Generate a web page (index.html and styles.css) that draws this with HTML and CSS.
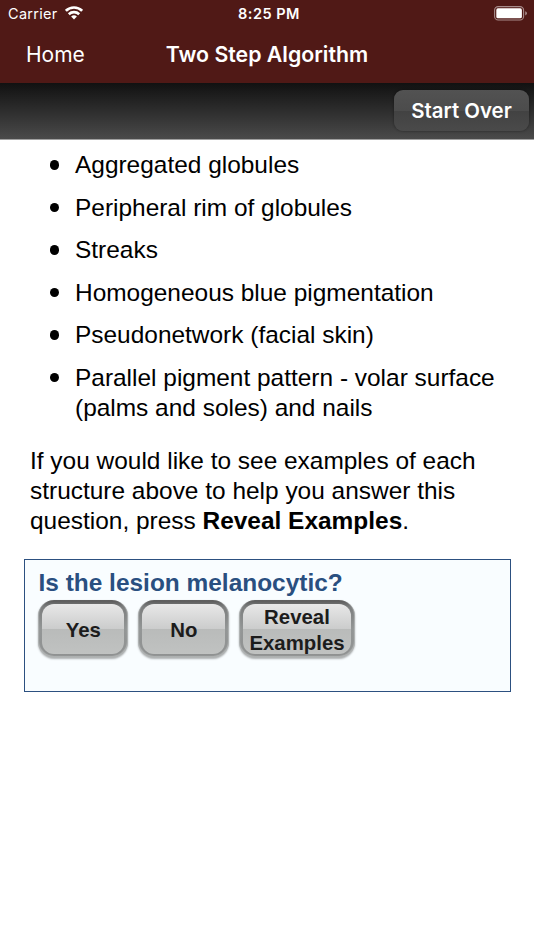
FILE: index.html
```
<!DOCTYPE html>
<html lang="en">

<head>
    <meta charset="UTF-8">
    <meta name="viewport" content="width=device-width, initial-scale=1.0">
    <title>Two Step Algorithm</title>
    <link rel="stylesheet" href="styles.css">
</head>

<body>
    <header class="header">
        <div class="statusBar">
            <div class="statusLeft">
                <span class="carrier">Carrier</span>
                <svg class="wifi" width="18" height="14" viewBox="0 0 18 14" fill="none" stroke="#fff" stroke-width="2.6">
                    <path d="M0.9 4.8a11.6 11.6 0 0 1 16.2 0" />
                    <path d="M3.8 8.2a7.5 7.5 0 0 1 10.4 0" />
                    <path d="M9 13.5l-2.9-2.9a4.1 4.1 0 0 1 5.8 0z" fill="#fff" stroke="none" />
                </svg>
            </div>
            <span class="time">8:25 PM</span>
            <div class="statusRight">
                <svg width="34" height="15" viewBox="0 0 34 15">
                    <rect x="0.6" y="0.6" width="29" height="13.4" rx="3.6" fill="none" stroke="#a78b8a" stroke-width="1.1" />
                    <rect x="2.3" y="2.3" width="25.6" height="10" rx="1.6" fill="#fff" />
                    <path d="M31.2 5.2q1.8 0.7 1.8 2.1t-1.8 2.1z" fill="#a78b8a" />
                </svg>
            </div>
        </div>
        <nav class="navBar">
            <a class="home">Home</a>
            <h1 class="title">Two Step Algorithm</h1>
        </nav>
    </header>
    <div class="toolbar">
        <button class="startOver">Start Over</button>
    </div>
    <main>
        <ul class="structures">
            <li>Aggregated globules</li>
            <li>Peripheral rim of globules</li>
            <li>Streaks</li>
            <li>Homogeneous blue pigmentation</li>
            <li>Pseudonetwork (facial skin)</li>
            <li>Parallel pigment pattern - volar surface (palms and soles) and nails</li>
        </ul>
        <p class="hint">If you would like to see examples of each<br>structure above to help you answer this<br>question, press <b>Reveal Examples</b>.</p>
        <section class="question">
            <h2>Is the lesion melanocytic?</h2>
            <div class="answers">
                <button class="answer"><span>Yes</span></button>
                <button class="answer"><span>No</span></button>
                <button class="answer reveal"><span>Reveal<br>Examples</span></button>
            </div>
        </section>
    </main>
</body>

</html>
```
FILE: styles.css
```
* {
    box-sizing: border-box;
}

body {
    margin: 0;
    background-color: #fff;
    color: #000;
    font-family: "Liberation Sans", Arial, sans-serif;
}

h1,
h2,
p,
ul {
    margin: 0;
    padding: 0;
}

.header {
    height: 83px;
    background-color: #501916;
    color: #fff;
    font-family: Inter, sans-serif;
}

.statusBar {
    display: grid;
    grid-template-columns: 1fr auto 1fr;
    align-items: center;
    height: 27px;
    padding: 0 6px 0 8px;
    font-size: 14.5px;
}

.statusLeft {
    display: flex;
    align-items: center;
    gap: 7px;
}

.carrier {
    letter-spacing: 0.3px;
}

.wifi {
    margin-top: -2px;
}

.time {
    padding-left: 2px;
    font-weight: 600;
    font-size: 14.5px;
    letter-spacing: 0.5px;
}

.statusRight {
    display: flex;
    justify-content: flex-end;
}

.navBar {
    display: grid;
    grid-template-columns: 1fr auto 1fr;
    align-items: center;
    height: 55px;
    padding-left: 26px;
    padding-right: 26px;
}

.home {
    font-size: 21px;
}

.title {
    padding-bottom: 2px;
    font-size: 21.3px;
    font-weight: 600;
}

.toolbar {
    display: flex;
    justify-content: flex-end;
    height: 57px;
    padding: 7px 5px 0 0;
    background: linear-gradient(#111, #4a4a4a);
    border-bottom: 1px solid #a0a0a0;
}

.startOver {
    width: 135px;
    height: 41px;
    padding: 0;
    border: none;
    border-radius: 9px;
    background: linear-gradient(#525252, #4c4c4c 50%, #424242 50%, #4a4a4a);
    box-shadow: 0 0 2px 1px rgba(0, 0, 0, 0.2);
    color: #fff;
    font-family: Inter, sans-serif;
    font-size: 20.4px;
    font-weight: 600;
}

.structures {
    display: flex;
    flex-direction: column;
    gap: 12.6px;
    padding: 10px 30px 0 49.5px;
    list-style: none;
    font-size: 24.45px;
    line-height: 30px;
}

.structures li {
    display: flex;
    gap: 16px;
}

.structures li::before {
    content: "";
    flex: none;
    width: 9.5px;
    height: 9.5px;
    margin-top: 10px;
    border-radius: 50%;
    background-color: #000;
}

.hint {
    padding: 23px 30px 0;
    font-size: 24.45px;
    line-height: 30px;
}

.question {
    width: 487px;
    height: 133px;
    margin: 23px 0 0 23.5px;
    padding: 9px 13px;
    border: 1.5px solid #2c5080;
    background-color: #f9fdff;
}

.question h2 {
    padding-left: 1px;
    color: #294f80;
    font-size: 24.45px;
    line-height: 28px;
}

.answers {
    display: flex;
    gap: 10px;
    margin-top: 3px;
}

/* metal rim around a glossy face */
.answer {
    width: 90.5px;
    height: 58px;
    padding: 4px;
    border: none;
    border-radius: 16px;
    background: linear-gradient(#575757, #7c7e7e 12%, #939696 50%, #8f9191);
    box-shadow: 0 1px 2px rgba(0, 0, 0, 0.3), inset 0 -1px 1px 1px rgba(200, 204, 204, 0.6);
    color: #1c1c1c;
    font-family: "Liberation Sans", Arial, sans-serif;
    font-size: 20.4px;
    font-weight: bold;
    line-height: 26px;
}

.answer span {
    display: flex;
    align-items: center;
    justify-content: center;
    height: 100%;
    padding: 2px 0 0 1px;
    border-radius: 12px;
    background: linear-gradient(#e8e8e8, #cbcccc 50%, #b9bbba 50%, #c0c2c1);
}

.reveal {
    width: 116px;
}
```
